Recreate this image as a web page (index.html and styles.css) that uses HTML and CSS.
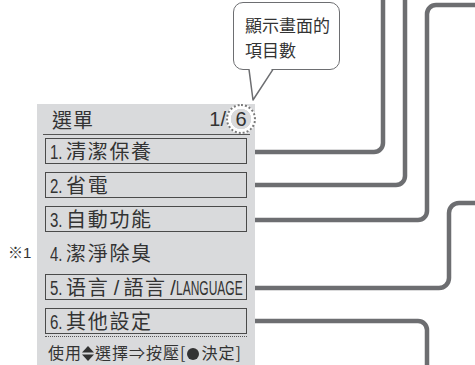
FILE: index.html
```html
<!DOCTYPE html>
<html lang="zh-Hant">
<head>
    <meta charset="UTF-8">
    <meta name="viewport" content="width=device-width, initial-scale=1.0">
    <title>選單</title>
    <link rel="stylesheet" href="styles.css">
</head>
<body>
    <div class="stage">
        <div class="bubble">顯示畫面的<br>項目數</div>

        <div class="panel">
            <div class="panel-head">
                <span class="title">選單</span>
                <span class="page">1/<span class="total">6</span></span>
            </div>
            <ul class="menu">
                <li class="item"><span class="no">1. </span>清潔保養</li>
                <li class="item"><span class="no">2. </span>省電</li>
                <li class="item"><span class="no">3. </span>自動功能</li>
                <li class="item plain"><span class="note">※1</span><span class="no">4. </span>潔淨除臭</li>
                <li class="item"><span class="no">5. </span>语言<span class="sep"> / </span>語言<span class="sep tight"> /</span><span class="cond">LANGUAGE</span></li>
                <li class="item"><span class="no">6. </span>其他設定</li>
            </ul>
            <div class="hint">使用<svg class="updown" viewBox="0 0 12 15" width="12" height="15"><polygon points="6,0 12,6.5 0,6.5"/><polygon points="0,8.5 12,8.5 6,15"/></svg>選擇⇒按壓[<span class="dot"></span>決定]</div>
        </div>

        <!-- connector lines and the bubble tail -->
        <svg class="wires" viewBox="0 0 475 365" width="475" height="365">
            <polygon points="249,67 273,67 253,100" fill="#fff"/>
            <polyline points="249,69.3 253,100 273,69.3" fill="none" stroke="#6d6e71" stroke-width="1.5" stroke-linejoin="round"/>
            <g fill="none" stroke="#6d6e71" stroke-width="4.5">
                <path d="M255 152 H374 A9 9 0 0 0 383 143 V-5"/>
                <path d="M255 185 H396 A9 9 0 0 0 405 176 V-5"/>
                <path d="M255 220 H418 A9 9 0 0 0 427 211 V14 A9 9 0 0 1 436 5 H480"/>
                <path d="M255 288 H439 A10 10 0 0 0 449 278 V213 A10 10 0 0 1 459 203 H480"/>
                <path d="M255 321 H418 A9 9 0 0 1 427 330 V370"/>
            </g>
        </svg>
    </div>
</body>
</html>
```
FILE: styles.css
```css
html, body {
    margin: 0;
    padding: 0;
}
body {
    width: 475px;
    height: 365px;
    overflow: hidden;
    background: #fff;
    color: #333;
    font-family: "Noto Sans CJK TC", sans-serif;
}
.stage {
    position: relative;
    width: 475px;
    height: 365px;
    padding-top: 2px;
    box-sizing: border-box;
    overflow: hidden;
}
.bubble {
    margin-left: 233px;
    width: 107px;
    height: 68px;
    box-sizing: border-box;
    border: 1.5px solid #6d6e71;
    border-radius: 10px;
    padding: 9px 0 0 11px;
    font-size: 17px;
    line-height: 25px;
}
.panel {
    margin: 34px 0 0 37px;
    width: 218px;
    height: 280px;
    background: #d9dadc;
}
.panel-head {
    display: flex;
    justify-content: space-between;
    align-items: center;
    height: 30px;
    margin: 0 5px 0 6px;
    padding-left: 9px;
    border-bottom: 1px solid #555;
    font-size: 20px;
}
.title {
    letter-spacing: 1px;
}
.page {
    display: flex;
    align-items: center;
    font-family: "Liberation Sans", sans-serif;
}
.total {
    display: inline-flex;
    align-items: center;
    justify-content: center;
    width: 30px;
    height: 30px;
    margin-right: -6px;
    box-sizing: border-box;
    border: 2px dotted #7a7a7a;
    border-radius: 50%;
    background: radial-gradient(circle, transparent 10px, #fff 10.5px);
}
.menu {
    list-style: none;
    margin: 0;
    padding: 3px 8px 0;
    display: flex;
    flex-direction: column;
    gap: 8px;
}
.item {
    height: 26px;
    box-sizing: border-box;
    border: 1px solid #4a4a4a;
    padding-left: 4px;
    font-size: 20px;
    line-height: 24px;
    letter-spacing: 1.7px;
    white-space: nowrap;
}
.item.plain {
    position: relative;
    border-color: transparent;
}
/* latin runs are narrower in the reference, squeeze them */
.no, .sep, .cond {
    display: inline-block;
    font-family: "Liberation Sans", sans-serif;
    letter-spacing: 0;
}
.no {
    width: 16px;
    transform: scaleX(.75);
    transform-origin: 0 50%;
}
.sep {
    width: 14px;
    text-align: center;
}
.sep.tight {
    width: 9px;
    text-align: right;
}
.cond {
    transform: scaleX(.6);
    transform-origin: 0 50%;
}
.note {
    position: absolute;
    left: -38px;
    font-family: "Liberation Sans", "Noto Sans CJK TC", sans-serif;
    font-size: 15px;
    letter-spacing: 0;
}
.hint {
    margin: 2px 8px 0;
    padding: 4px 0 0 3px;
    border-top: 1.5px dotted #555;
    font-size: 16px;
    line-height: 22px;
    letter-spacing: 1px;
    white-space: nowrap;
}
.updown {
    fill: #333;
    vertical-align: -2px;
    margin-right: 1px;
}
.dot {
    display: inline-block;
    width: 12px;
    height: 12px;
    margin: 0 2px 0 1px;
    border-radius: 50%;
    background: #333;
    vertical-align: -1px;
}
.wires {
    position: absolute;
    left: 0;
    top: 0;
    pointer-events: none;
}
```
